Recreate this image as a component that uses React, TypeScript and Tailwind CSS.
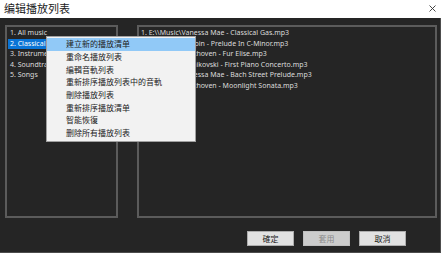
import React from "react";

const font = { fontFamily: '"Noto Sans", "Noto Sans CJK TC", "Noto Sans CJK SC", sans-serif' };

const leftItems = ["1. All music", "2. Classical", "3. Instrumental", "4. Soundtracks", "5. Songs"];
const rightItems = [
  "1. E:\\\\Music\\Vanessa Mae - Classical Gas.mp3",
  "2. E:\\\\Music\\Chopin - Prelude In C-Minor.mp3",
  "3. E:\\\\Music\\Beethoven - Fur Elise.mp3",
  "4. E:\\\\Music\\Tchaikovski - First Piano  Concerto.mp3",
  "5. E:\\\\Music\\Vanessa Mae - Bach Street Prelude.mp3",
  "6. E:\\\\Music\\Beethoven - Moonlight Sonata.mp3",
];
const menuItems = [
  "建立新的播放清单",
  "重命名播放列表",
  "編輯音軌列表",
  "重新排序播放列表中的音軌",
  "刪除播放列表",
  "重新排序播放清单",
  "智能恢復",
  "删除所有播放列表",
];

export default function App() {
  return (
    <div className="w-[441px] h-[253px] flex flex-col overflow-hidden relative" style={font}>
      <div className="h-[18px] bg-white flex items-center justify-between pl-[4px] pr-[5px] shrink-0">
        <span className="text-[11px] leading-none text-[#222] mt-[-2px]" style={{ fontFamily: '"Noto Sans CJK SC", sans-serif' }}>编辑播放列表</span>
        <svg width="7" height="7" viewBox="0 0 7 7" className="mt-[-2px]">
          <path d="M0.5 0.5 L6.5 6.5 M6.5 0.5 L0.5 6.5" stroke="#333" strokeWidth="0.9" />
        </svg>
      </div>
      <div className="flex-1 bg-[#252525] border-r border-b border-[#4d4d4d] flex flex-col">
        <div className="flex pt-[7px] pl-[5px] gap-[19px]">
          <div className="w-[113px] h-[193px] border-2 border-[#5b5b5b] pt-[1px] pl-[1px] text-[7px] leading-[10.5px] text-[#dcdcdc] overflow-hidden">
            {leftItems.map((t, i) => (
              <div key={i} className={"px-[2px] whitespace-nowrap " + (i === 1 ? "bg-[#0a74d6] text-white w-[50px]" : "")}>{t}</div>
            ))}
          </div>
          <div className="w-[300px] h-[193px] border-2 border-[#5b5b5b] pt-[1px] pl-[1px] text-[7px] leading-[10.5px] text-[#dcdcdc] overflow-hidden">
            {rightItems.map((t, i) => (
              <div key={i} className="px-[1px] whitespace-nowrap">{t}</div>
            ))}
          </div>
        </div>
        <div className="flex justify-end gap-[9px] pr-[34px] mt-[13px]">
          <button className="w-[47px] h-[15px] bg-[#e1e1e1] border border-[#adadad] text-[8px] text-[#222] flex items-center justify-center leading-none">確定</button>
          <button className="w-[47px] h-[15px] bg-[#cccccc] border border-[#bfbfbf] text-[8px] text-[#8a8a8a] flex items-center justify-center leading-none">套用</button>
          <button className="w-[47px] h-[15px] bg-[#e1e1e1] border border-[#adadad] text-[8px] text-[#222] flex items-center justify-center leading-none">取消</button>
        </div>
      </div>
      <div className="absolute left-[46px] top-[36px] w-[150px] bg-[#f2f2f2] border border-[#a0a0a0] py-[1px] text-[8px] text-[#222]">
        {menuItems.map((t, i) => (
          <div key={i} className={"h-[12.7px] flex items-center pl-[19px] whitespace-nowrap " + (i === 0 ? "bg-[#91c9f7]" : "")}>{t}</div>
        ))}
      </div>
    </div>
  );
}
